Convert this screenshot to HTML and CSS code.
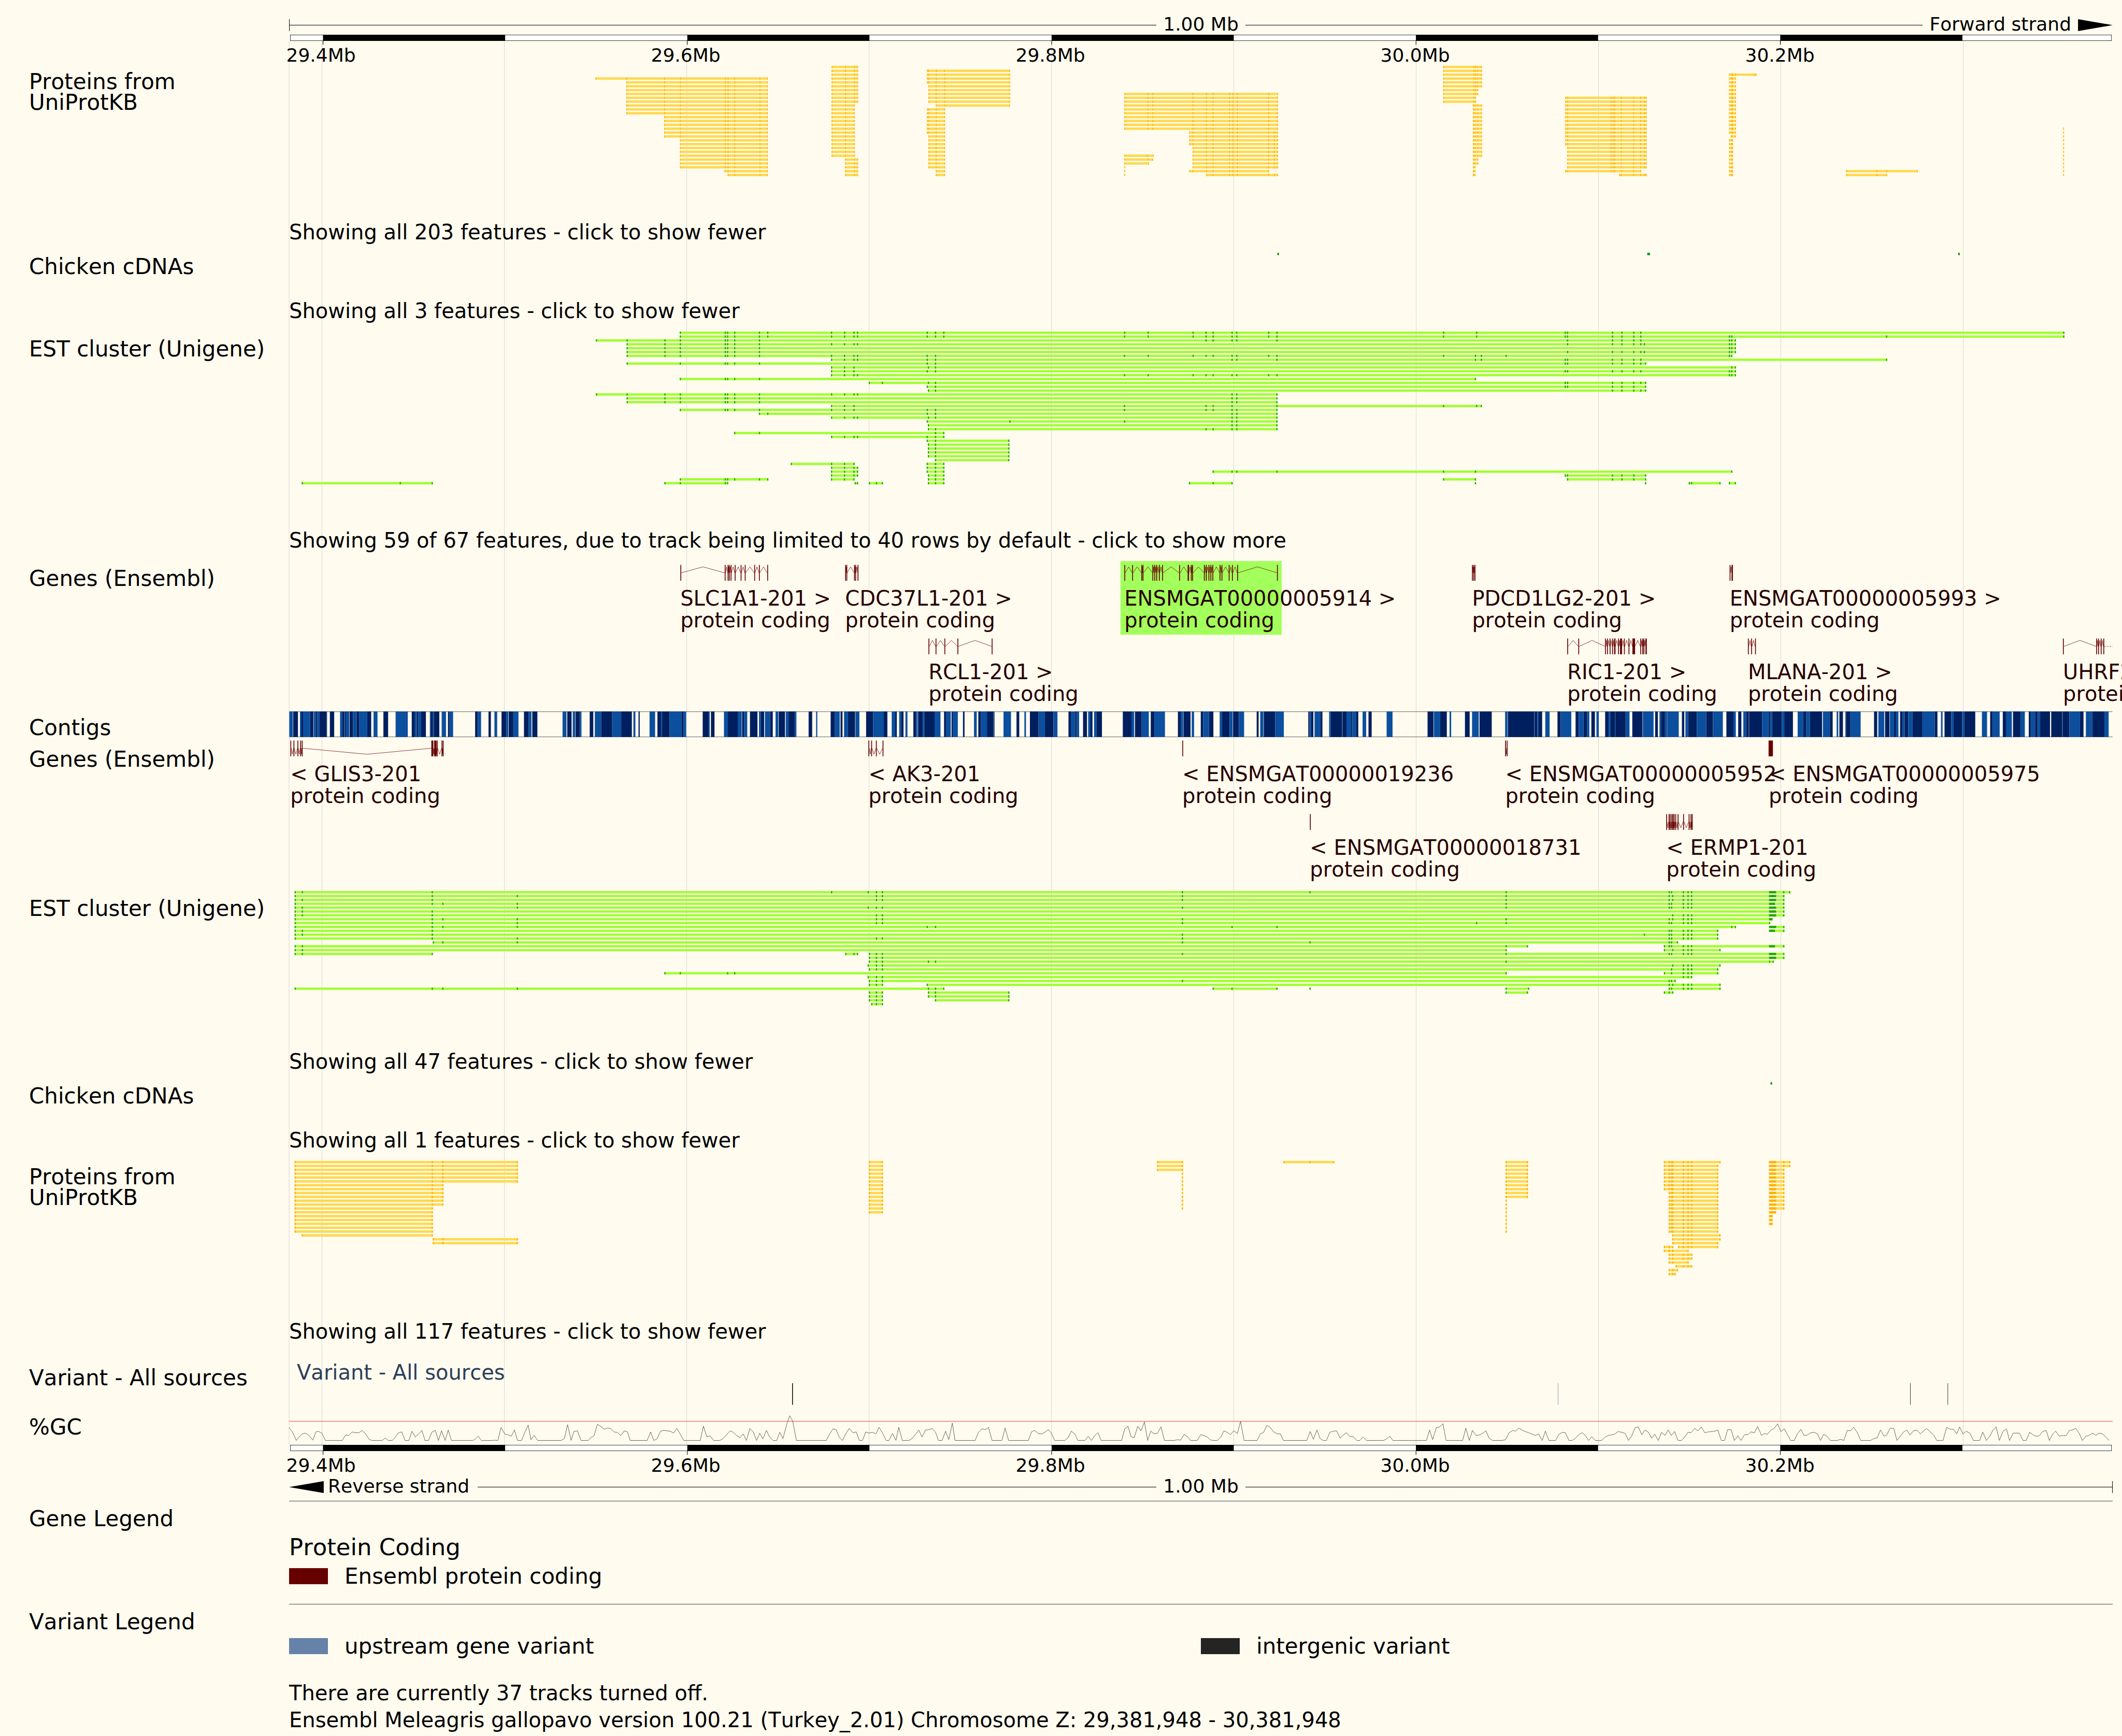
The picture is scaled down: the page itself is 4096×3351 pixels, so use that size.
FILE: index.html
```html
<!DOCTYPE html>
<html lang="en">
<head>
<meta charset="utf-8">
<title>Region in detail: Turkey chromosome Z</title>
<link rel="stylesheet" href="styles.css">
</head>
<body>
<main class="browser">
  <div class="region">
    <div class="gridlines" aria-hidden="true"><svg id="gridlines" viewBox="0 0 4725 100" preserveAspectRatio="none"></svg></div>

    <header class="track">
      <div class="plot axis axis-top">
        <div class="scale">
          <div class="scale-side"><span class="arm arm-start"></span></div>
          <span class="scale-text">1.00 Mb</span>
          <div class="scale-side">
            <span class="arm"></span>
            <span class="strand">Forward strand</span>
            <svg class="arrow" viewBox="0 0 90 31"><path d="M0 0 90 15.500 0 31z"/></svg>
          </div>
        </div>
        <svg class="ruler" viewBox="0 0 4725 16"></svg>
        <div class="ruler-labels"></div>
      </div>
    </header>

    <section class="track">
      <h2 class="label label-double">Proteins from<br>UniProtKB</h2>
      <div class="plot">
        <svg id="proteins-fwd" viewBox="0 0 4725 290"></svg>
        <button type="button" class="message">Showing all 203 features - click to show fewer</button>
      </div>
    </section>

    <section class="track">
      <h2 class="label label-tight">Chicken cDNAs</h2>
      <div class="plot">
        <svg id="cdna-fwd" viewBox="0 0 4725 10"></svg>
        <button type="button" class="message">Showing all 3 features - click to show fewer</button>
      </div>
    </section>

    <section class="track">
      <h2 class="label label-near">EST cluster (Unigene)</h2>
      <div class="plot">
        <svg id="est-fwd" viewBox="0 0 4725 400"></svg>
        <button type="button" class="message">Showing 59 of 67 features, due to track being limited to 40 rows by default - click to show more</button>
      </div>
    </section>

    <section class="track">
      <h2 class="label label-near">Genes (Ensembl)</h2>
      <div class="plot" id="genes-fwd"></div>
    </section>

    <section class="track">
      <h2 class="label label-mid">Contigs</h2>
      <div class="plot"><svg id="contigs" viewBox="0 0 4725 75"></svg></div>
    </section>

    <section class="track track-spaced">
      <h2 class="label label-low">Genes (Ensembl)</h2>
      <div class="plot" id="genes-rev"></div>
    </section>

    <section class="track">
      <h2 class="label label-near">EST cluster (Unigene)</h2>
      <div class="plot">
        <svg id="est-rev" viewBox="0 0 4725 300"></svg>
        <button type="button" class="message">Showing all 47 features - click to show fewer</button>
      </div>
    </section>

    <section class="track">
      <h2 class="label label-tight">Chicken cDNAs</h2>
      <div class="plot">
        <svg id="cdna-rev" viewBox="0 0 4725 10"></svg>
        <button type="button" class="message">Showing all 1 features - click to show fewer</button>
      </div>
    </section>

    <section class="track">
      <h2 class="label label-double">Proteins from<br>UniProtKB</h2>
      <div class="plot">
        <svg id="proteins-rev" viewBox="0 0 4725 300"></svg>
        <button type="button" class="message">Showing all 117 features - click to show fewer</button>
      </div>
    </section>

    <section class="track">
      <h2 class="label label-variant">Variant - All sources</h2>
      <div class="plot">
        <p class="subtitle">Variant - All sources</p>
        <svg id="variants" viewBox="0 0 4725 56"></svg>
      </div>
    </section>

    <section class="track">
      <h2 class="label label-low">%GC</h2>
      <div class="plot"><svg id="gc" viewBox="0 1 4725 104"></svg></div>
    </section>
  </div>

  <footer class="track">
    <div class="plot axis">
      <svg class="ruler" viewBox="0 0 4725 16"></svg>
      <div class="ruler-labels"></div>
      <div class="scale">
        <div class="scale-side">
          <svg class="arrow" viewBox="0 0 90 31"><path d="M90 0 0 15.500 90 31z"/></svg>
          <span class="strand">Reverse strand</span>
          <span class="arm"></span>
        </div>
        <span class="scale-text">1.00 Mb</span>
        <div class="scale-side"><span class="arm arm-end"></span></div>
      </div>
    </div>
  </footer>

  <section class="track legend legend-genes">
    <h2 class="label">Gene Legend</h2>
    <div class="plot ruled">
      <h3 class="group">Protein Coding</h3>
      <ul class="keys"><li><span class="swatch swatch-coding"></span>Ensembl protein coding</li></ul>
    </div>
  </section>

  <section class="track legend legend-variants">
    <h2 class="label">Variant Legend</h2>
    <div class="plot ruled">
      <ul class="keys">
        <li><span class="swatch swatch-upstream"></span>upstream gene variant</li>
        <li><span class="swatch swatch-intergenic"></span>intergenic variant</li>
      </ul>
    </div>
  </section>

  <section class="track">
    <div class="plot notes">
      <p>There are currently 37 tracks turned off.</p>
      <p>Ensembl Meleagris gallopavo version 100.21 (Turkey_2.01) Chromosome Z: 29,381,948 - 30,381,948</p>
    </div>
  </section>
</main>
<script src="tracks.js"></script>
</body>
</html>
```

FILE: styles.css
```css
* { box-sizing: border-box; }

body {
  margin: 0;
  background: #fffbef;
  color: #000;
  font: 40px/40px "DejaVu Sans", Verdana, sans-serif;
  font-kerning: none;
  overflow-x: hidden;
}

h2, h3, p, ul { margin: 0; padding: 0; font: inherit; font-kerning: none; list-style: none; }

svg { display: block; width: 100%; overflow: visible; }

.browser { overflow: hidden; }
.region { position: relative; }

.track {
  position: relative;
  display: grid;
  grid-template-columns: 558px minmax(0, 1fr);
  padding-right: 18px;
}
.track-spaced { margin-bottom: 15px; }
.plot { grid-column: 2; min-width: 0; }

.gridlines { position: absolute; inset: 79px 18px 0 558px; }
.gridlines svg { height: 100%; }

.label { margin-bottom: -8px; padding-left: 56px; font-size: 42px; white-space: nowrap; }
.label-tight { padding-top: 7px; }
.label-double { padding-top: 11px; }
.label-near { padding-top: 14px; }
.label-mid { padding-top: 19px; }
.label-low { padding-top: 24px; }
.label-variant { padding-top: 30px; }

/* Axis: scale bar, ruler and megabase labels */
.axis { font-size: 36px; }
.axis-top { padding-top: 27px; }
.scale {
  display: grid;
  grid-template-columns: 1fr auto 1fr;
  align-items: center;
  height: 40px;
}
.scale-text { padding: 0 13px; }
.scale-side { display: flex; align-items: center; }
.arm { flex: 1; height: 23px; margin-top: 3px; background: linear-gradient(#000, #000) center / 100% 1px no-repeat; }
.arm-start { border-left: 1px solid #000; }
.arm-end { border-right: 1px solid #000; }
.strand { padding: 0 16px 0 8px; }
.axis-top .strand { padding: 0 13px; }
.arrow { width: 67px; height: 23px; margin-top: 3px; }
.ruler-labels { display: grid; height: 48px; }
.tick-label {
  grid-area: 1 / 1;
  justify-self: start;
  padding: 8px 4px 0 0;
  transform: translateX(-50%);
}

.message {
  display: block;
  margin: 85px 0 20px;
  padding: 0;
  border: 0;
  background: none;
  color: inherit;
  font: inherit;
  font-kerning: none;
  white-space: nowrap;
  cursor: pointer;
}

/* Genes */
.gene-row { display: grid; }
.gene-row svg { grid-area: 1 / 1; }
.gene {
  grid-area: 1 / 1;
  justify-self: start;
  padding-top: 51px;
  color: #270000;
  line-height: 42px;
  white-space: nowrap;
}

.subtitle { padding: 19px 0 1px 15px; color: #2b3f5b; }

/* Legends and notes */
.legend { font-size: 42px; }
.legend .label { padding-top: 15px; }
.ruled { border-top: 1px solid #444; }
.legend-genes { margin-top: 8px; }
.legend-genes .plot { padding: 68px 0 32px; }
.group { font-size: 45px; line-height: 42px; }
.keys { display: grid; grid-template-columns: 1fr 1fr; line-height: 42px; }
.keys li { display: flex; align-items: center; gap: 32px; }
.legend-genes .keys { padding-top: 14px; }
.legend-variants .plot { padding: 60px 0 43px; }
.swatch { width: 75px; height: 31px; }
.swatch-coding { background: #660000; }
.swatch-upstream { background: #6682a8; }
.swatch-intergenic { background: #242424; }
.notes { line-height: 52px; white-space: nowrap; }
```

FILE: tracks.js
```js
// Plots are drawn in a 4725-unit wide space that spans 1 Mb.
const SPAN = 4725;
const START = 29.381948;
const MB_STEPS = [29.4, 29.5, 29.6, 29.7, 29.8, 29.9, 30.0, 30.1, 30.2, 30.3];
const at = mb => (mb - START) * SPAN;
const $ = id => document.getElementById(id);
const rect = (x, y, w, h, fill) =>
  `<rect x="${x.toFixed(1)}" y="${y}" width="${w.toFixed(1)}" height="${h}" fill="${fill}"/>`;

// Each tile stores its own integer coordinates: x = origin + value * unit.
const WIDE = { origin: -50, unit: 3.0612 };
const WEST = { origin: 750, unit: 1.2117 };
const EAST = { origin: 2550, unit: 1.4031 };
const GENE_WEST = { origin: -50, unit: 1.5306 };
const GENE_EAST = { origin: 2100, unit: 1.6901 };
const REV = { origin: -50, unit: 1.0204 };
const place = (tile, v) => tile.origin + v * tile.unit;

// A block is "x" (thin) or "x~y" (from x to y).
function blocks(tile, text, thin) {
  return text.trim().split(/\s+/).map(t => {
    const [a, b] = t.split('~').map(Number);
    const x = place(tile, a);
    return { x, end: b ? place(tile, b) : x + thin };
  });
}

// "rows | feature / feature", rows being "n" or "n-m".
function features(tile, text, light, dark) {
  const thin = tile === WIDE ? 3 : 2;
  let out = '';
  text.trim().split('\n').forEach(line => {
    const [rows, body] = line.split('|');
    const [from, to = from] = rows.trim().split('-').map(Number);
    for (let r = from; r <= to; r++) {
      body.split('/').forEach(f => {
        const b = blocks(tile, f, thin);
        out += rect(b[0].x, r * 10, b[b.length - 1].end - b[0].x, 6, light);
        b.forEach(e => { out += rect(e.x, r * 10, e.end - e.x, 6, dark); });
      });
    }
  });
  return out;
}

const YELLOW = ['#ffd84c', '#ffb200'];
const GREEN = ['#a0ff30', '#22a800'];

const proteinsWest = `
3|36 102 183 217 313 319 333 387 403
4-12|102 183 217 313 319 333 387 403
13-18|183 217 313 319 333 387 403
19-26|217 313 319 333 387 403
27|312 319 333 387 403
28|319 333 387 403
0-9|541 570 589 596
10-23|541 570 589
24-28|570 589 596
1-4|745 748 764 782 921
5-9|748 764 782 921
10|764 782 921
11-17|745 748 764 782
18-26|748 764 782
27-28|764 782
7-16|1167 1217 1227 1313 1342 1356 1391 1398 1408 1475 1494
17-20|1306 1313 1342 1356 1391 1398 1408 1475 1487 1494
21-26|1313 1342 1356 1391 1398 1408 1475 1487 1494
27|1306 1313 1342 1356 1391 1398 1408 1475
28|1342 1356 1391 1398 1408 1475 1487 1494
23|1167 1216 1228
24|1167 1217 1227
25|1167 1218
26-28|1167`;

const proteinsEast = `
0-5|314 370 373 377 384
6-7|314 370 373 377
8-9|314 370 373
10-23|369 372 377 384
24-25|369 372 377
26-28|369 372
8-20|539 543 623 627 630 642 665 678 685 688
21-26|543 623 627 630 642 665 678 685 688
27|539 543 623 627 630 642 665 678
28|639 642 665 678 685 688
2|842 846~849 853 888 891
3-17|842 846~849 853
18|845 847 853
19-28|842 846~849
27|1058 1114 1132 1189
28|1058 1114 1132
16-28|1459`;

const proteinsRev = `
0-5|21 137 146 209
6-11|21 137 146
12-18|21 137
19|27 137
20-21|138 146 209
0-13|507 518
0-2|751 772
3-12|772
0|858 880 900
0-9|1046 1064
10-18|1046
0|1180 1184 1186 1187 1196 1200 1203 1227
1-7|1180 1184 1186 1187 1196 1200 1203 1225
8-18|1184 1186 1187 1196 1200 1203 1225
19-20|1187 1196 1200 1203 1227
21|1187 1196 1200 1203 1225
22|1180 1184 1187 / 1192 1196 1200 1203 1225
23|1180 1184 1187 1200
24-25|1184 1187 1196 1200 1203
26|1184 1187 1200
27|1190 1196 1200 1203
28|1184 1187 1191
29|1184 1187 1189
0-1|1269~1275 1281 1286
2-12|1269~1275 1281
13|1269~1275
14-16|1269~1272`;

const estFwd = `
0|347 385 387 393 414 421 475 486 494 497 556 563 570 723 743 792 781 798 814 818 845 852 993 1021 1096 1098 1136 1144 1154 1160 1518
1|347 385 387 393 414 421 475 486 494 497 556 563 570 723 743 781 792 798 814 818 845 852 993 1021 1096 1098 1136 1144 1154 1160 1235 1237 1368 1518
2|276 302 334 347 385 387 393 414 792 798 814 818 852 1098 1136 1144 1154 1160 1235 1237 1240
3|302 334 347 385 387 393 414 475 486 494 497 1098 1136 1144 1154 1160 1163 1235 1237 1240
4|302 334 347 385 387 393 414 1235 1237 1240
5|302 334 347 385 387 393 414 1098 1136 1144 1154 1160 1163 1235 1237 1240
6|302 334 347 385 387 393 414 475 486 494 497 556 563 723 743 781 792 798 814 818 845 852 993 1020 1025 1046 1235 1237
7|475 486 494 497 556 563 814 818 852 1020 1025 1096 1098 1136 1144 1154 1160 1368
8|302 347 385 387 393 414 556 563 1096 1098 1136 1144 1154 1160 1164
9|475 486 494 557 563 1237 1240
10|475 486 494 556 563 1096 1098 1136 1144 1154 1160 1235 1237 1240
11|475 486 494 497 723 743 781 792 798 814 818 845 852 1235 1237 1240
12|347 385 387 393 414 1020
13|507 518 557 563 1096 1098 1136 1144 1154 1160 1164
14|556 563 1096 1098 1136 1144 1154 1164
15|557 563 1136 1144 1154 1160 1164
16|276 302 334 347 385 387 393 414 475 486 494 497 814 818 852
17-18|302 334 347 385 387 393 414 814 818 852
19|475 486 494 723 792 798 814 852 993 1021 1025
20|347 385 387 393 414 475 486 494 556 563 723 792 798 814 818 852
21|414 421 556 563 814 818 852
22|475 486 494 497 557 563 814 818 852
23|556 626 723 814 818 852
24|557 814 818 852
25|557 563 792 798 814 818 852
26|393 414 563 570
27|475 486 494 497 556 563 570
28|556 563 625
29-32|557 563 625
33|563 625
34|441 475 486 494 / 556 563 570
35|475 486 494 497 / 556 563 570
36|475 486 494 497 / 556 563 570 / 798 814 818 852 993 1020 1237
37|475 486 494 497 / 557 563 570 / 1096 1098 1136 1144 1154 1164
38|347 385 387 393 414 421 / 475 486 494 / 557 563 570 / 993 1020 / 1098 1136 1144 1154 1164
39|27 110 137 / 334 347 385 387 / 495 497 / 507 513 518 / 557 563 570 / 778 798 814 / 1020 / 1164 / 1201 1203 1227 / 1235 1240`;

const estRev = `
0|21 27 137 475 506 513 518 772 880 1046 1184 1186 1196 1200 1203 1269~1275 1281 1286
1|21 137 209 513 518 772 1046 1184 1187 1196 1200 1203 1269~1275 1281
2|21 27 137 513 518 772 1046 1184 1187 1196 1200 1203 1269~1275 1281
3|21 137 146 209 1046 1184 1186 1196 1200 1203 1269~1274 1281
4|21 27 209 506 513 518 772 1046 1184 1186 1196 1200 1203 1269~1275 1281
5|21 27 137 1269~1275 1281
6|21 27 137 513 518 1187 1196 1200 1203 1269~1275 1281
7|21 137 146 209 513 518 772 1046 1184 1187 1196 1200 1203 1269~1272
8|21 137 209 513 518 772 1021 1046 1184 1186 1196 1200 1203 1269
9|21 137 146 209 556 563 814 852 1237 1240 / 1269~1275 1281
10|21 27 137 1184 1186 1196 1200 1203 1225 / 1269~1274 1281
11|21 27 137 772 1163 1184 1186 1196 1200 1203 1225
12|21 137 209 513 518 772 1184 1186 1196 1200 1203 1225
13|138 146 209 772 880 1184 1186 1191
14|21 27 1046 1064 / 1180 1184 1186 1196 1200 1203 1269~1274 1281
15|21 27 1046 / 1180 1187 1196 1200 1203 1227
16|21 27 137 / 487 494 497 / 507 513 518 772 1046 1184 1186 1196 1200 1203 1269~1275 1281
17|507 513 518 1269~1275 1281
18|507 513 518 557 563 1046 1269 1272
19|506 513 518 1187 1196 1200 1203 1227
20|507 513 518 1186 1196 1200 1203 1225
21|334 347 387 393 1046 / 1180 1186 1196 1200 1203 1225
22|506 513 518 1196 1200 1203
23|507 513 518 772 1184 1186 1189
24|507 513 518 / 556 1184 1187 1196 1200 1203 1227
25|21 137 146 209 557 563 570 / 798 814 852 / 880 / 1046 1065 / 1184 1186 1196 1200 1203 1227
26|507 513 518 / 557 563 625 / 1046 1064 / 1180 1184 1187
27|507 513 518 / 557 563 625
28|507 513 518 / 563 625
29|509 513 518`;

$('proteins-fwd').innerHTML =
  features(WEST, proteinsWest, ...YELLOW) + features(EAST, proteinsEast, ...YELLOW);
$('proteins-rev').innerHTML = features(WIDE, proteinsRev, ...YELLOW);
$('est-fwd').innerHTML = features(WIDE, estFwd, ...GREEN);
$('est-rev').innerHTML = features(WIDE, estRev, ...GREEN);
$('cdna-fwd').innerHTML = [[2561, 4], [3521, 7], [4328, 4]]
  .map(([x, w]) => rect(x, 0, w, 6, '#009000')).join('');
$('cdna-rev').innerHTML = rect(3841, 0, 4, 6, '#009000');

// Rulers and grid lines
$('gridlines').innerHTML = [0, ...MB_STEPS.map(at)]
  .map(x => rect(x - 0.5, 0, 1, 100, '#cccccc')).join('');
document.querySelectorAll('.ruler').forEach(svg => {
  let out = rect(0, 0, SPAN, 16, '#000') + rect(1, 1, SPAN - 2, 14, '#fff');
  MB_STEPS.forEach((mb, i) => {
    if (i % 2 === 0) {
      out += rect(at(mb), 0, SPAN / 10, 16, '#000') + rect(at(mb) - 0.5, 16, 1.4, 10, '#000');
    }
  });
  svg.innerHTML = out;
});
document.querySelectorAll('.ruler-labels').forEach(box => {
  box.innerHTML = MB_STEPS.filter((mb, i) => i % 2 === 0).map(mb =>
    `<span class="tick-label" style="margin-left:${(at(mb) / SPAN * 100).toFixed(3)}%">${mb.toFixed(1)}Mb</span>`).join('');
});

// Genes: rows of [tile, exons, name]
const genesFwd = [
  [
    [GENE_WEST, '695 770 775 777 780 787 797 804 820 828 842', 'SLC1A1-201 >'],
    [GENE_WEST, '974 976 989 991 995', 'CDC37L1-201 >'],
    [GENE_EAST, '38 50 64 66 81 84 87 91 96 122 135~137 140 142 160 163 167 170 173 184 187 198 203 211 272', 'ENSMGAT00000005914 >', true],
    [GENE_EAST, '571 573 575', 'PDCD1LG2-201 >'],
    [GENE_EAST, '966 969~971', 'ENSMGAT00000005993 >']
  ],
  [
    [GENE_WEST, '1115 1127 1142 1164 1222', 'RCL1-201 >'],
    [GENE_EAST, '717 734 775 778 782 786 789~791 795 798~801 804 811 817~821 829 832 834 837~839', 'RIC1-201 >'],
    [GENE_EAST, '994 999 1005', 'MLANA-201 >'],
    [GENE_EAST, '1477 1528 1531 1535 1539', 'UHRF2-201 >']
  ]
];
const genesRev = [
  [
    [REV, '52 60 70 77 81 410~415 417 419 421 424 436 439', '< GLIS3-201'],
    [REV, '1520 1527 1539 1556', '< AK3-201'],
    [REV, '2317', '< ENSMGAT00000019236'],
    [REV, '3137 3141', '< ENSMGAT00000005952'],
    [REV, '3806~3817', '< ENSMGAT00000005975']
  ],
  [
    [REV, '2641', '< ENSMGAT00000018731'],
    [REV, '3546 3552 3555 3559 3562 3565 3569 3575 3589 3603 3608 3611', '< ERMP1-201']
  ]
];
const GENE = '#660000';

function drawGenes(id, rows, up) {
  const base = up ? 30.5 : 30;
  const peak = up ? 15 : 45.5;
  $(id).innerHTML = rows.map(row => {
    let shapes = '';
    let labels = '';
    row.forEach(([tile, exons, name, selected]) => {
      const b = blocks(tile, exons, 2.2);
      if (selected) shapes += rect(b[0].x - 10, 0, b[b.length - 1].end - b[0].x + 20, 191, '#a3ff5c');
      b.forEach((e, i) => {
        shapes += rect(e.x, 10, e.end - e.x, 41, GENE);
        const next = b[i + 1];
        if (next) {
          shapes += `<path d="M${e.end} ${base}L${(e.end + next.x) / 2} ${peak}L${next.x} ${base}" fill="none" stroke="${GENE}"/>`;
        }
      });
      if (name.startsWith('UHRF2')) {
        shapes += `<path d="M${b[4].end} ${base}H${SPAN}" stroke="${GENE}" stroke-dasharray="4 3"/>`;
      }
      labels += `<div class="gene" style="margin-left:${(b[0].x / SPAN * 100).toFixed(3)}%">${name.replace('<', '&lt;').replace('>', '&gt;')}<br>protein coding</div>`;
    });
    return `<div class="gene-row"><svg viewBox="0 0 ${SPAN} 190">${shapes}</svg>${labels}</div>`;
  }).join('');
}
drawGenes('genes-fwd', genesFwd, true);
drawGenes('genes-rev', genesRev, false);

// Contigs: a position, then d (dark), l (light) or . (gap) from there on.
const contigTiles = [
  '49l 58. 59d 71. 76l 80d 84l 102d 110. 111l 116d 120l 126d 144l 145. 152d 163. 178l 184d 188l 190d 193l 201. 202d 211l 220d 227l 247d 257. 263l 273. 288d 300. 319l 350. 360d 368l 373d 377l 384d 396. 406l 408d 414l 416d 430. 436l 447. 452d 456l 465. 521d 528l 536. 555d 561. 570l 577. 588d 600l 605. 606d 618l 631. 645d 657l 664. 666d 679. 743l 753. 755d 766. 769l 775. 776d 787l 791. 812d 821. 825l 841d 869l 892d 919. 923l 928. 936d 939. 964l 978. 984d 993l 996d 1015l 1045d 1050l 1057. 1099d 1115l 1117. 1120d 1129. 1153l 1163d 1188l 1198. 1199d 1204l 1212. 1219d 1238. 1242l 1247d 1255. 1257l 1270d 1277. 1284l 1291. 1292d 1308. 1310l 1317d 1333l 1337. 1368d 1377. 1387l 1390. 1424d 1435l 1447. 1449d 1454. 1458l 1468d 1486. 1487l 1497. 1514d 1532l 1559d',
  '0. 11l 20d 24. 30l 35d 41. 46l 51. 66d 73l 77. 78d 90l 94d 120l 135. 144d 149l 161. 163d 167l 179. 192d 196. 220l 227. 231d 238l 253d 269l 270d 272. 295l 314. 328d 335. 348l 352. 362d 384l 400d 422l 432. 460d 466l 477d 481l 487. 497d 507. 510l 516d 521. 525l 531d 545. 598d 620l 627. 629d 646l 664. 669d 678l 705. 738d 745l 751. 752d 770. 773l 779. 796d 802l 817d 828. 844l 850d 869l 877. 878d 893l 906. 938d 943. 947l 955. 956d 985l 1007. 1069d 1072l 1076d 1082. 1085l 1100d 1105. 1122l 1126d 1155l 1156d 1166l 1178d 1181l 1190d 1196. 1207l 1216. 1222d 1230. 1268l 1283. 1372d 1387. 1388l 1404d 1421. 1428l 1432. 1467d 1479. 1485l 1502. 1504d 1535.',
  '1l 7. 8d 75l 76d 83l 86d 95. 103l 114. 134d 142l 169. 180d 188l 200d 209l 215. 220d 229. 233l 239. 255d 264l 269d 280l 281d 307l 317. 324d 350. 351l 378. 382d 389. 393l 397d 407l 412d 413l 442. 450d 456. 459l 466d 488l 512d 529l 554. 563d 581l 587. 593d 601. 606l 613d 620l 621d 654l 670d 673l 679d 704l 710d 732. 744l 758d 766l 775d 806. 808l 826d 833. 843l 847. 850d 859. 865l 867d 878l 904. 938d 946. 949l 964. 966d 977. 978l 989d 994l 1000. 1004d 1010l 1016d 1025l 1036d 1061l 1092d 1099. 1108l 1112. 1117d 1134l 1140d 1162l 1167d 1195. 1212l 1225. 1233d 1239l 1257. 1265d 1273l 1288. 1291d 1310l 1321. 1331d 1336l 1347d 1354l 1360d 1385. 1388d 1416l 1417d 1434l 1461d 1470. 1476l 1486d 1488l 1493d 1523l 1534.'
];
const TILE = 1568;
{
  const runs = contigTiles.flatMap((tile, t) => tile.split(' ').map(s =>
    ({ x: place(REV, parseInt(s, 10) + t * TILE), kind: s.slice(-1) })));
  const fills = { d: '#001f5f', l: '#0b4f9e' };
  let out = rect(0, 10, SPAN, 1, '#333') + rect(0, 75, SPAN, 1, '#333');
  runs.forEach((run, i) => {
    if (fills[run.kind]) out += rect(run.x, 10, runs[i + 1].x - run.x, 66, fills[run.kind]);
  });
  $('contigs').innerHTML = out;
}

// Variants
$('variants').innerHTML = rect(1303, 0, 2, 56, '#000') + rect(3288, 0, 1, 56, '#6682a8') +
  rect(4201, 0, 1.2, 56, '#222') + rect(4298, 0, 1.2, 56, '#222');

// %GC curve: x,y pairs per tile
const gcTiles = [
  '49,183 57,217 67,283 75,253 83,232 90,226 99,243 109,280 117,216 124,213 132,226 141,283 184,283 192,241 200,244 209,217 217,223 226,223 234,205 243,232 252,274 259,283 285,283 293,265 301,283 311,283 319,256 327,223 335,217 343,283 353,283 361,211 369,256 377,235 386,205 394,283 403,283 411,220 420,205 428,283 436,208 445,283 453,202 461,283 514,283 520,277 529,250 537,283 563,283 571,281 579,283 587,183 597,235 605,238 613,250 621,202 629,283 639,283 647,223 656,163 663,277 671,244 680,283 740,283 748,268 756,160 765,283 772,214 781,208 790,283 808,283 815,262 823,247 832,157 841,175 849,196 857,187 866,190 874,217 882,220 891,244 900,208 908,217 915,283 958,283 967,217 975,283 983,271 992,211 1000,205 1017,211 1025,226 1034,190 1051,283 1093,283 1101,172 1110,256 1118,247 1127,283 1143,283 1151,268 1169,208 1177,220 1185,244 1194,262 1202,232 1210,283 1219,190 1227,214 1236,283 1244,226 1252,271 1261,205 1269,256 1278,283 1287,283 1295,220 1303,268 1312,163 1320,91 1328,136 1337,283 1413,283 1421,235 1430,193 1438,199 1446,259 1454,283 1463,229 1471,190 1481,223 1489,217 1497,283 1505,283 1513,217 1521,226 1530,220 1539,232 1547,181 1556,226 1565,283',
  '4,283 13,229 22,283 29,181 38,283 55,283 64,265 80,202 88,256 97,202 106,199 114,190 122,217 130,283 139,283 148,211 156,277 165,148 172,283 223,283 231,223 240,193 249,199 257,181 266,283 291,283 299,187 308,283 358,283 366,217 374,205 383,229 392,232 400,220 409,199 416,223 425,283 451,283 459,262 467,211 476,232 484,283 502,283 510,250 518,283 527,244 535,223 543,283 595,283 603,193 611,172 619,253 627,262 636,172 644,208 653,139 661,283 669,211 678,232 686,226 695,178 704,283 729,283 737,277 745,280 754,235 762,253 770,283 787,283 796,238 804,244 812,256 821,280 829,283 838,283 847,256 855,208 863,220 871,238 880,208 889,229 897,134 906,283 939,283 948,229 955,223 964,166 972,181 981,217 990,232 998,232 1006,283 1065,283 1074,214 1082,274 1091,202 1099,268 1107,283 1115,283 1124,220 1132,211 1141,208 1150,265 1158,241 1166,223 1175,253 1183,253 1192,283 1200,283 1208,256 1217,283 1260,283 1268,271 1276,250 1284,283 1369,283 1377,202 1385,277 1394,184 1402,178 1411,154 1419,283 1461,283 1469,187 1478,283 1486,205 1495,244 1503,241 1511,229 1520,208 1528,265 1537,283 1562,283',
  '2,277 11,223 20,205 27,211 36,187 45,205 78,244 86,232 95,283 103,211 112,283 129,283 137,238 146,220 154,223 163,283 171,283 179,268 188,238 196,223 204,241 213,283 221,253 230,283 246,283 255,256 263,244 272,240 280,232 288,214 298,220 306,229 314,283 322,250 331,184 339,178 348,238 356,202 365,220 373,265 381,235 390,283 398,220 407,244 415,202 423,244 431,214 440,283 449,283 457,256 465,220 473,223 482,190 491,208 499,178 508,223 516,217 533,211 541,202 550,283 558,283 566,199 575,199 583,283 592,247 600,283 609,238 617,238 625,217 634,223 642,175 652,244 659,229 667,235 676,202 684,190 693,154 701,214 710,193 726,283 735,283 743,232 752,196 760,244 768,241 777,223 786,220 794,232 802,283 810,235 818,250 827,283 844,283 853,274 861,283 870,205 878,208 886,181 895,220 904,283 929,283 937,268 946,262 954,202 963,250 970,241 979,187 988,190 996,283 1012,220 1021,202 1029,241 1038,208 1047,202 1055,232 1071,190 1089,241 1097,283 1113,283 1122,181 1131,196 1139,196 1148,232 1155,178 1164,232 1172,211 1181,226 1190,283 1206,283 1214,217 1223,283 1231,253 1240,202 1248,178 1256,283 1265,214 1274,193 1282,283 1291,226 1307,226 1316,283 1324,283 1333,220 1341,238 1349,250 1357,247 1366,214 1375,205 1383,283 1391,235 1399,211 1408,250 1417,244 1425,247 1434,205 1441,202 1450,190 1459,229 1467,283 1476,250 1484,244 1493,226 1501,244 1509,226 1518,232 1535,283'
];
{
  const points = gcTiles.flatMap((tile, t) => tile.split(' ').map(p => {
    const [x, y] = p.split(',').map(Number);
    return `${place(REV, x + t * TILE).toFixed(1)},${(y / 3).toFixed(1)}`;
  }));
  $('gc').innerHTML = rect(0, 44, SPAN, 1, '#f00') +
    `<polyline points="${points.join(' ')}" fill="none" stroke="#333"/>`;
}
```
